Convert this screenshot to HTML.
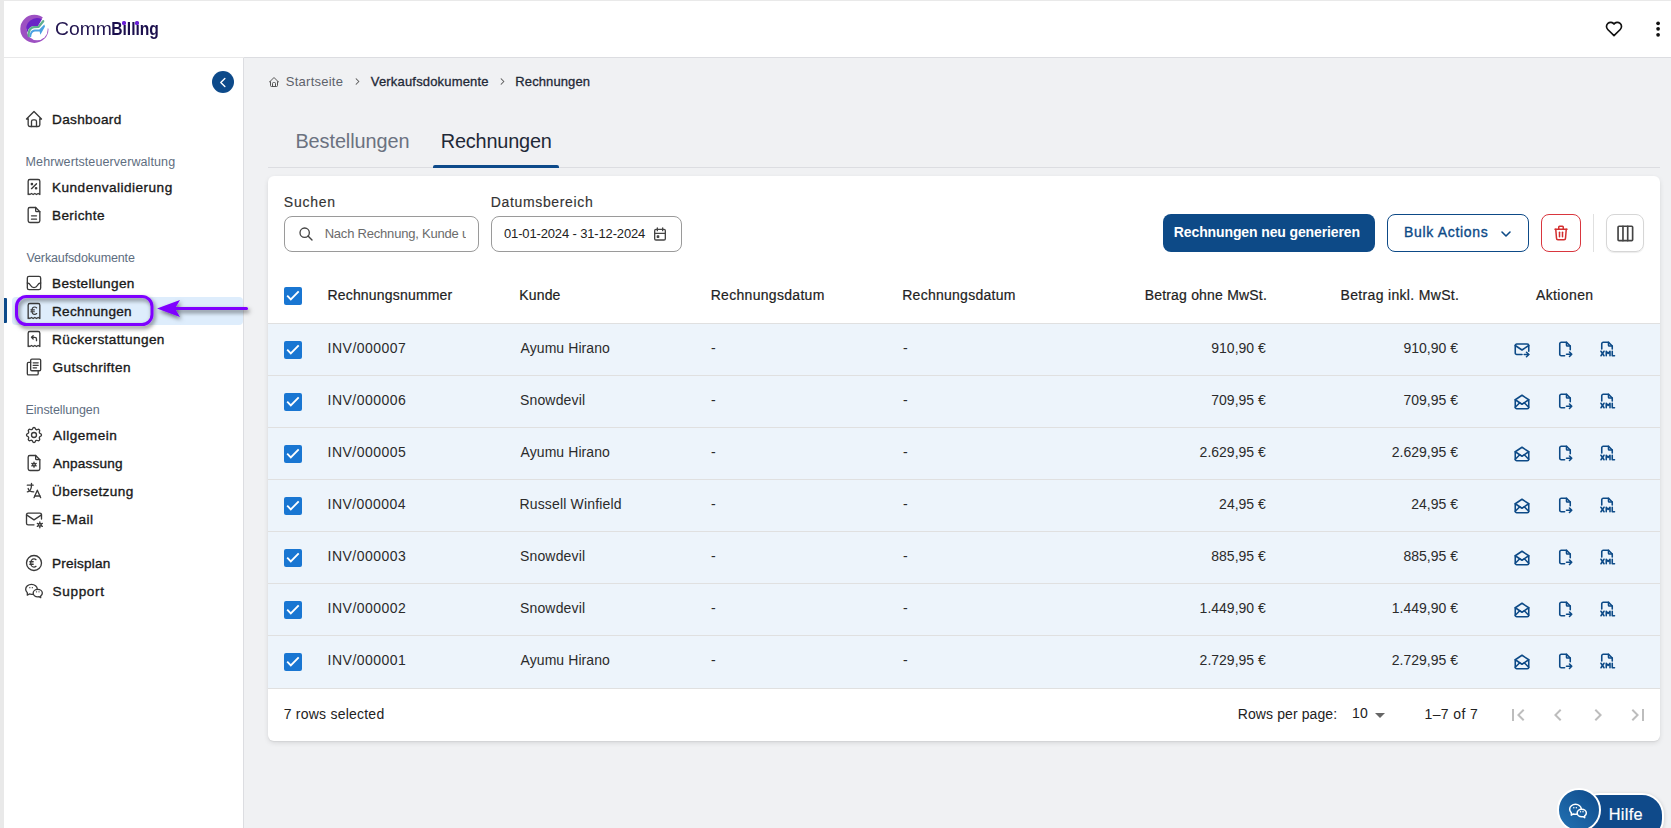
<!DOCTYPE html>
<html><head><meta charset="utf-8">
<style>
html,body{margin:0;padding:0;}
body{width:1671px;height:828px;position:relative;overflow:hidden;background:#f0f1f3;font-family:"Liberation Sans", sans-serif;}
.t{position:absolute;white-space:nowrap;}
</style></head><body>
<div style="position:absolute;left:0px;top:0px;width:4px;height:828px;background:#e9e9e9"></div>
<div style="position:absolute;left:0px;top:0px;width:1671px;height:1px;background:#e9e9e9"></div>
<div style="position:absolute;left:4px;top:1px;width:1667px;height:56px;background:#fff"></div>
<div style="position:absolute;left:4px;top:57px;width:240px;height:1px;background:#e8e8e9"></div>
<div style="position:absolute;left:244px;top:57px;width:1427px;height:1px;background:#dcdde1"></div>
<svg style="position:absolute;left:17px;top:12px;width:36px;height:34px" viewBox="0 0 36 34">
<defs><mask id="lm"><rect x="0" y="0" width="36" height="34" fill="#fff"/><circle cx="20.2" cy="17.8" r="10.5" fill="#000"/><path d="M17.5 16.9 L31.9 -3 L40 -3 L40 16.2 Z" fill="#000"/></mask></defs>
<circle cx="17.4" cy="16.9" r="14.1" fill="#9d50c2" mask="url(#lm)"/>
<path d="M24.9 7.3 A10.5 10.5 0 0 0 9.9 19.6 L10.6 20 C11.2 16.8 13.2 14.6 16.6 14.2 L21 13.9 Z" fill="#6a22c6"/>
<path d="M11.7 24 C11.4 18.6 13.2 15.6 16.8 15.2 L21.7 14.8 L26.2 9.2" fill="none" stroke="#5fae8e" stroke-width="2.3" stroke-linecap="round" stroke-linejoin="round"/>
<path d="M12.9 25.2 C12.5 20.6 14.2 17.7 17.7 17.5 L22.3 17.4 L27.3 12.4 L28 14.4 L23.4 22.8 L22.6 19.5 L17.9 19.6 C15.7 19.8 14.4 21.6 14.1 25.2 Z" fill="#4aa0e2"/>
</svg>
<div class="t" style="left:54.90px;top:15.00px;font-size:18.3px;line-height:28px;color:#22154f;font-weight:400;letter-spacing:0.000px;transform:scaleX(1.0579);transform-origin:0.90px 0;">Comm</div>
<div class="t" style="left:110.80px;top:15.00px;font-size:18.3px;line-height:28px;color:#1b0f4d;font-weight:700;letter-spacing:0.000px;transform:scaleX(0.8542);transform-origin:1.20px 0;">Billing</div>
<div style="position:absolute;left:122.4px;top:21.4px;width:3.2px;height:3.2px;background:#6a1fd8;border-radius:50%"></div>
<div style="position:absolute;left:135.4px;top:21.4px;width:3.2px;height:3.2px;background:#6a1fd8;border-radius:50%"></div>
<svg style="position:absolute;left:1604px;top:19px;width:20px;height:20px;" viewBox="0 0 24 24" fill="none" stroke="#111" stroke-width="2" stroke-linecap="round" stroke-linejoin="round"><path d="M19.5 12.572l-7.5 7.428l-7.5 -7.428a5 5 0 1 1 7.5 -6.566a5 5 0 1 1 7.5 6.572"/></svg>
<svg style="position:absolute;left:1654px;top:18px;width:8px;height:22px" viewBox="0 0 8 22"><circle cx="4.1" cy="5.3" r="1.85" fill="#111"/><circle cx="4.1" cy="10.8" r="1.85" fill="#111"/><circle cx="4.1" cy="16.8" r="1.85" fill="#111"/></svg>
<div style="position:absolute;left:4px;top:58px;width:239px;height:770px;background:#fff"></div>
<div style="position:absolute;left:243px;top:58px;width:1px;height:770px;background:#dcdde1"></div>
<div style="position:absolute;left:212px;top:71px;width:22px;height:22px;border-radius:50%;background:#0d4a8a"></div>
<svg style="position:absolute;left:217px;top:75.5px;width:13px;height:13px;" viewBox="0 0 24 24" fill="none" stroke="#fff" stroke-width="2.6" stroke-linecap="round" stroke-linejoin="round"><path d="M14.5 4.5l-7.5 7.5l7.5 7.5"/></svg>
<div style="position:absolute;left:12px;top:297px;width:231px;height:28px;border-radius:4px;background:#deedfc"></div>
<div style="position:absolute;left:4px;top:298px;width:3px;height:25px;background:#0d4a8a;border-radius:0 1px 1px 0"></div>
<svg style="position:absolute;left:24px;top:109px;width:20px;height:20px;" viewBox="0 0 24 24" fill="none" stroke="#3a3a3a" stroke-width="1.6" stroke-linecap="round" stroke-linejoin="round"><path d="M5 12l-2 0l9 -9l9 9l-2 0"/><path d="M5 12v7a2 2 0 0 0 2 2h10a2 2 0 0 0 2 -2v-7"/><path d="M9 21v-6a2 2 0 0 1 2 -2h2a2 2 0 0 1 2 2v6"/></svg>
<div class="t" style="left:52.00px;top:109.00px;font-size:13.6px;line-height:21px;color:#1a1a1a;font-weight:400;letter-spacing:0.344px;-webkit-text-stroke:0.35px #1a1a1a;">Dashboard</div>
<div class="t" style="left:25.60px;top:153.00px;font-size:12.5px;line-height:19px;color:#5e6d80;font-weight:400;letter-spacing:0.096px;">Mehrwertsteuerverwaltung</div>
<svg style="position:absolute;left:24px;top:177px;width:20px;height:20px;" viewBox="0 0 24 24" fill="none" stroke="#3a3a3a" stroke-width="1.6" stroke-linecap="round" stroke-linejoin="round"><path d="M9 14l6 -6"/><circle cx="9.5" cy="8.5" r="0.8"/><circle cx="14.5" cy="13.5" r="0.8"/><path d="M5 21v-16a2 2 0 0 1 2 -2h10a2 2 0 0 1 2 2v16l-2 -1.2l-2 1.2l-2 -1.2l-2 1.2l-2 -1.2l-2 1.2l-2 -1.2z"/></svg>
<div class="t" style="left:52.00px;top:177.00px;font-size:13.6px;line-height:21px;color:#1a1a1a;font-weight:400;letter-spacing:0.475px;-webkit-text-stroke:0.35px #1a1a1a;">Kundenvalidierung</div>
<svg style="position:absolute;left:24px;top:205px;width:20px;height:20px;" viewBox="0 0 24 24" fill="none" stroke="#3a3a3a" stroke-width="1.6" stroke-linecap="round" stroke-linejoin="round"><path d="M14 3v4a1 1 0 0 0 1 1h4"/><path d="M17 21h-10a2 2 0 0 1 -2 -2v-14a2 2 0 0 1 2 -2h7l5 5v11a2 2 0 0 1 -2 2z"/><path d="M9 13l6 0"/><path d="M9 17l6 0"/></svg>
<div class="t" style="left:52.00px;top:205.00px;font-size:13.6px;line-height:21px;color:#1a1a1a;font-weight:400;letter-spacing:0.371px;-webkit-text-stroke:0.35px #1a1a1a;">Berichte</div>
<div class="t" style="left:26.55px;top:249.00px;font-size:12.5px;line-height:19px;color:#5e6d80;font-weight:400;letter-spacing:-0.137px;">Verkaufsdokumente</div>
<svg style="position:absolute;left:24px;top:273px;width:20px;height:20px;" viewBox="0 0 24 24" fill="none" stroke="#3a3a3a" stroke-width="1.6" stroke-linecap="round" stroke-linejoin="round"><path d="M4 6a2 2 0 0 1 2 -2h12a2 2 0 0 1 2 2v12a2 2 0 0 1 -2 2h-12a2 2 0 0 1 -2 -2z"/><path d="M4 12c2 0 3 1 4 3c1 2 2.5 2.5 4 2.5s3 -0.5 4 -2.5c1 -2 2 -3 4 -3"/></svg>
<div class="t" style="left:52.00px;top:273.00px;font-size:13.6px;line-height:21px;color:#1a1a1a;font-weight:400;letter-spacing:0.345px;-webkit-text-stroke:0.35px #1a1a1a;">Bestellungen</div>
<svg style="position:absolute;left:24px;top:301px;width:20px;height:20px;" viewBox="0 0 24 24" fill="none" stroke="#3a3a3a" stroke-width="1.6" stroke-linecap="round" stroke-linejoin="round"><path d="M5 21v-16a2 2 0 0 1 2 -2h10a2 2 0 0 1 2 2v16l-2 -1.2l-2 1.2l-2 -1.2l-2 1.2l-2 -1.2l-2 1.2l-2 -1.2z"/><path d="M15.2 8.2c-.6 -.6 -1.4 -1 -2.3 -1c-1.9 0 -3.4 2 -3.4 4.4s1.5 4.4 3.4 4.4c.9 0 1.7 -.4 2.3 -1" stroke-width="1.4"/><path d="M8.2 10.6h4.3" stroke-width="1.3"/><path d="M8.2 12.8h4.3" stroke-width="1.3"/></svg>
<div class="t" style="left:52.00px;top:301.00px;font-size:13.6px;line-height:21px;color:#1a1a1a;font-weight:400;letter-spacing:0.283px;-webkit-text-stroke:0.35px #1a1a1a;">Rechnungen</div>
<svg style="position:absolute;left:24px;top:329px;width:20px;height:20px;" viewBox="0 0 24 24" fill="none" stroke="#3a3a3a" stroke-width="1.6" stroke-linecap="round" stroke-linejoin="round"><path d="M5 21v-16a2 2 0 0 1 2 -2h10a2 2 0 0 1 2 2v16l-2 -1.2l-2 1.2l-2 -1.2l-2 1.2l-2 -1.2l-2 1.2l-2 -1.2z"/><path d="M15 14v-2a2 2 0 0 0 -2 -2h-4l2 -2m-2 2l2 2"/></svg>
<div class="t" style="left:52.00px;top:329.00px;font-size:13.6px;line-height:21px;color:#1a1a1a;font-weight:400;letter-spacing:0.390px;-webkit-text-stroke:0.35px #1a1a1a;">Rückerstattungen</div>
<svg style="position:absolute;left:24px;top:357px;width:20px;height:20px;" viewBox="0 0 24 24" fill="none" stroke="#3a3a3a" stroke-width="1.6" stroke-linecap="round" stroke-linejoin="round"><path d="M8 4a1.5 1.5 0 0 1 1.5 -1.5h9a1.5 1.5 0 0 1 1.5 1.5v11a1.5 1.5 0 0 1 -1.5 1.5h-9a1.5 1.5 0 0 1 -1.5 -1.5z"/><path d="M8 6.5h-2.5a1.5 1.5 0 0 0 -1.5 1.5v12a1.5 1.5 0 0 0 1.5 1.5h10a1.5 1.5 0 0 0 1.5 -1.5v-3"/><path d="M11 7h6"/><path d="M11 10h6"/><path d="M11 13h4"/></svg>
<div class="t" style="left:52.40px;top:357.00px;font-size:13.6px;line-height:21px;color:#1a1a1a;font-weight:400;letter-spacing:0.450px;-webkit-text-stroke:0.35px #1a1a1a;">Gutschriften</div>
<div class="t" style="left:25.60px;top:401.00px;font-size:12.5px;line-height:19px;color:#5e6d80;font-weight:400;letter-spacing:-0.088px;">Einstellungen</div>
<svg style="position:absolute;left:24px;top:425px;width:20px;height:20px;" viewBox="0 0 24 24" fill="none" stroke="#3a3a3a" stroke-width="1.6" stroke-linecap="round" stroke-linejoin="round"><path d="M10.325 4.317c.426 -1.756 2.924 -1.756 3.35 0a1.724 1.724 0 0 0 2.573 1.066c1.543 -.94 3.31 .826 2.37 2.37a1.724 1.724 0 0 0 1.065 2.572c1.756 .426 1.756 2.924 0 3.35a1.724 1.724 0 0 0 -1.066 2.573c.94 1.543 -.826 3.31 -2.37 2.37a1.724 1.724 0 0 0 -2.572 1.065c-.426 1.756 -2.924 1.756 -3.35 0a1.724 1.724 0 0 0 -2.573 -1.066c-1.543 .94 -3.31 -.826 -2.37 -2.37a1.724 1.724 0 0 0 -1.065 -2.572c-1.756 -.426 -1.756 -2.924 0 -3.35a1.724 1.724 0 0 0 1.066 -2.573c-.94 -1.543 .826 -3.31 2.37 -2.37c1 .608 2.296 .07 2.572 -1.065z"/><path d="M9 12a3 3 0 1 0 6 0a3 3 0 0 0 -6 0"/></svg>
<div class="t" style="left:53.05px;top:425.00px;font-size:13.6px;line-height:21px;color:#1a1a1a;font-weight:400;letter-spacing:0.513px;-webkit-text-stroke:0.35px #1a1a1a;">Allgemein</div>
<svg style="position:absolute;left:24px;top:453px;width:20px;height:20px;" viewBox="0 0 24 24" fill="none" stroke="#3a3a3a" stroke-width="1.6" stroke-linecap="round" stroke-linejoin="round"><path d="M14 3v4a1 1 0 0 0 1 1h4"/><path d="M17 21h-10a2 2 0 0 1 -2 -2v-14a2 2 0 0 1 2 -2h7l5 5v11a2 2 0 0 1 -2 2z"/><circle cx="12" cy="14" r="1.5"/><path d="M12 11v1"/><path d="M12 16v1"/><path d="M9.4 12.5l.9 .5"/><path d="M13.7 15l.9 .5"/><path d="M14.6 12.5l-.9 .5"/><path d="M10.3 15l-.9 .5"/></svg>
<div class="t" style="left:53.05px;top:453.00px;font-size:13.6px;line-height:21px;color:#1a1a1a;font-weight:400;letter-spacing:0.194px;-webkit-text-stroke:0.35px #1a1a1a;">Anpassung</div>
<svg style="position:absolute;left:24px;top:481px;width:20px;height:20px;" viewBox="0 0 24 24" fill="none" stroke="#3a3a3a" stroke-width="1.6" stroke-linecap="round" stroke-linejoin="round"><path d="M4 5h7"/><path d="M9 3v2c0 4.418 -2.239 8 -5 8"/><path d="M5 9c0 2.144 2.952 3.908 6.7 4"/><path d="M12 20l4 -9l4 9"/><path d="M19.1 18h-6.2"/></svg>
<div class="t" style="left:52.05px;top:481.00px;font-size:13.6px;line-height:21px;color:#1a1a1a;font-weight:400;letter-spacing:0.420px;-webkit-text-stroke:0.35px #1a1a1a;">Übersetzung</div>
<svg style="position:absolute;left:24px;top:509px;width:20px;height:20px;" viewBox="0 0 24 24" fill="none" stroke="#3a3a3a" stroke-width="1.6" stroke-linecap="round" stroke-linejoin="round"><path d="M12 19h-7a2 2 0 0 1 -2 -2v-10a2 2 0 0 1 2 -2h14a2 2 0 0 1 2 2v5"/><path d="M3 7l9 6l9 -6"/><circle cx="19" cy="19" r="1.6"/><path d="M19 15.5v1.5"/><path d="M19 21v1.5"/><path d="M22 17.2l-1.3 .8"/><path d="M17.3 20l-1.3 .8"/><path d="M16 17.2l1.3 .8"/><path d="M20.7 20l1.3 .8"/></svg>
<div class="t" style="left:52.00px;top:509.00px;font-size:13.6px;line-height:21px;color:#1a1a1a;font-weight:400;letter-spacing:0.500px;-webkit-text-stroke:0.35px #1a1a1a;">E-Mail</div>
<svg style="position:absolute;left:24px;top:553px;width:20px;height:20px;" viewBox="0 0 24 24" fill="none" stroke="#3a3a3a" stroke-width="1.6" stroke-linecap="round" stroke-linejoin="round"><path d="M12 12m-9 0a9 9 0 1 0 18 0a9 9 0 1 0 -18 0"/><path d="M14.401 8c-.669 -.628 -1.5 -1 -2.401 -1c-2.21 0 -4 2.239 -4 5s1.79 5 4 5c.9 0 1.731 -.372 2.4 -1"/><path d="M7 10.5h4"/><path d="M7 13.5h4"/></svg>
<div class="t" style="left:52.00px;top:553.00px;font-size:13.6px;line-height:21px;color:#1a1a1a;font-weight:400;letter-spacing:0.219px;-webkit-text-stroke:0.35px #1a1a1a;">Preisplan</div>
<svg style="position:absolute;left:24px;top:581px;width:20px;height:20px;" viewBox="0 0 24 24" fill="none" stroke="#3a3a3a" stroke-width="1.6" stroke-linecap="round" stroke-linejoin="round"><path d="M16.5 10c3.038 0 5.5 2.015 5.5 4.5c0 1.397 -.778 2.645 -2 3.47l0 2.03l-1.964 -1.178a6.649 6.649 0 0 1 -1.536 .178c-3.038 0 -5.5 -2.015 -5.5 -4.5s2.462 -4.5 5.5 -4.5z"/><path d="M11.197 15.698c-.69 .196 -1.43 .302 -2.197 .302a8.008 8.008 0 0 1 -2.612 -.432l-2.388 1.432v-2.801c-1.237 -1.082 -2 -2.564 -2 -4.199c0 -3.314 3.134 -6 7 -6c3.782 0 6.863 2.57 7 5.785l0 .233"/><path d="M10 8h.01"/><path d="M7 8h.01"/><path d="M15 13h.01"/><path d="M18 13h.01"/></svg>
<div class="t" style="left:52.45px;top:581.00px;font-size:13.6px;line-height:21px;color:#1a1a1a;font-weight:400;letter-spacing:0.667px;-webkit-text-stroke:0.35px #1a1a1a;">Support</div>
<svg style="position:absolute;left:268px;top:76px;width:12px;height:12px;" viewBox="0 0 24 24" fill="none" stroke="#555" stroke-width="2" stroke-linecap="round" stroke-linejoin="round"><path d="M5 12l-2 0l9 -9l9 9l-2 0"/><path d="M5 12v7a2 2 0 0 0 2 2h10a2 2 0 0 0 2 -2v-7"/><path d="M9 21v-6a2 2 0 0 1 2 -2h2a2 2 0 0 1 2 2v6"/></svg>
<div class="t" style="left:285.80px;top:72.00px;font-size:13px;line-height:20px;color:#5d626b;font-weight:400;letter-spacing:0.250px;">Startseite</div>
<svg style="position:absolute;left:352px;top:76px;width:11px;height:11px;" viewBox="0 0 24 24" fill="none" stroke="#555" stroke-width="2.3" stroke-linecap="round" stroke-linejoin="round"><path d="M9 6l6 6l-6 6"/></svg>
<div class="t" style="left:370.85px;top:72.00px;font-size:13px;line-height:20px;color:#1f2937;font-weight:400;letter-spacing:0.172px;-webkit-text-stroke:0.3px #1f2937;">Verkaufsdokumente</div>
<svg style="position:absolute;left:497px;top:76px;width:11px;height:11px;" viewBox="0 0 24 24" fill="none" stroke="#555" stroke-width="2.3" stroke-linecap="round" stroke-linejoin="round"><path d="M9 6l6 6l-6 6"/></svg>
<div class="t" style="left:515.35px;top:72.00px;font-size:13px;line-height:20px;color:#1f2937;font-weight:400;letter-spacing:0.106px;-webkit-text-stroke:0.3px #1f2937;">Rechnungen</div>
<div class="t" style="left:295.45px;top:126.00px;font-size:19.9px;line-height:30px;color:#6b7280;font-weight:400;letter-spacing:-0.086px;">Bestellungen</div>
<div class="t" style="left:440.75px;top:126.00px;font-size:19.9px;line-height:30px;color:#1f2937;font-weight:400;letter-spacing:-0.183px;">Rechnungen</div>
<div style="position:absolute;left:268px;top:167px;width:1392px;height:1px;background:#dcdde1"></div>
<div style="position:absolute;left:433px;top:165px;width:126px;height:3px;background:#0d4a8a;border-radius:2px 2px 0 0"></div>
<div style="position:absolute;left:268px;top:176px;width:1392px;height:565px;background:#fff;border-radius:6px;box-shadow:0 2px 5px rgba(0,0,0,0.10),0 1px 1px rgba(0,0,0,0.05)"></div>
<div class="t" style="left:283.85px;top:192.00px;font-size:14px;line-height:21px;color:#333;font-weight:400;letter-spacing:0.750px;-webkit-text-stroke:0.15px #333;">Suchen</div>
<div style="position:absolute;left:284px;top:216px;width:193px;height:34px;border:1px solid #9a9a9a;border-radius:8px"></div>
<svg style="position:absolute;left:298px;top:226px;width:16px;height:16px;" viewBox="0 0 24 24" fill="none" stroke="#444" stroke-width="2" stroke-linecap="round" stroke-linejoin="round"><path d="M10 10m-7 0a7 7 0 1 0 14 0a7 7 0 1 0 -14 0"/><path d="M21 21l-6 -6"/></svg>
<div style="position:absolute;left:320px;top:216px;width:146px;height:36px;overflow:hidden"><div class="t" style="left:4.65px;top:8.00px;font-size:13px;line-height:20px;color:#6b6b6b;font-weight:400;letter-spacing:-0.205px;">Nach Rechnung, Kunde und Status</div></div>
<div class="t" style="left:490.75px;top:192.00px;font-size:14px;line-height:21px;color:#333;font-weight:400;letter-spacing:0.650px;-webkit-text-stroke:0.15px #333;">Datumsbereich</div>
<div style="position:absolute;left:491px;top:216px;width:189px;height:34px;border:1px solid #9a9a9a;border-radius:8px"></div>
<div class="t" style="left:504.00px;top:224.00px;font-size:13px;line-height:20px;color:#222;font-weight:400;letter-spacing:-0.148px;">01-01-2024 - 31-12-2024</div>
<svg style="position:absolute;left:652px;top:226px;width:16px;height:16px;" viewBox="0 0 24 24" fill="none" stroke="#444" stroke-width="2" stroke-linecap="round" stroke-linejoin="round"><path d="M4 7a2 2 0 0 1 2 -2h12a2 2 0 0 1 2 2v12a2 2 0 0 1 -2 2h-12a2 2 0 0 1 -2 -2z"/><path d="M16 3l0 4"/><path d="M8 3l0 4"/><path d="M4 11l16 0"/><path d="M8 15h2v2h-2z"/></svg>
<div style="position:absolute;left:1163px;top:214px;width:212px;height:38px;background:#0d4a87;border-radius:8px"></div>
<div class="t" style="left:1173.85px;top:222.00px;font-size:14px;line-height:21px;color:#fff;font-weight:700;letter-spacing:-0.119px;">Rechnungen neu generieren</div>
<div style="position:absolute;left:1387px;top:214px;width:140px;height:36px;border:1px solid #0d4a87;border-radius:8px"></div>
<div class="t" style="left:1403.95px;top:222.00px;font-size:14px;line-height:21px;color:#0d4a87;font-weight:400;letter-spacing:0.682px;-webkit-text-stroke:0.35px #0d4a87;">Bulk Actions</div>
<svg style="position:absolute;left:1498px;top:226px;width:16px;height:16px;" viewBox="0 0 24 24" fill="none" stroke="#0d4a87" stroke-width="2.4" stroke-linecap="round" stroke-linejoin="round"><path d="M6 9l6 6l6 -6"/></svg>
<div style="position:absolute;left:1541px;top:214px;width:38px;height:36px;border:1px solid #d9363e;border-radius:8px"></div>
<svg style="position:absolute;left:1552px;top:224px;width:18px;height:18px;" viewBox="0 0 24 24" fill="none" stroke="#d32f2f" stroke-width="2" stroke-linecap="round" stroke-linejoin="round"><path d="M4 7l16 0"/><path d="M10 11l0 6"/><path d="M14 11l0 6"/><path d="M5 7l1 12a2 2 0 0 0 2 2h8a2 2 0 0 0 2 -2l1 -12"/><path d="M9 7v-3a1 1 0 0 1 1 -1h4a1 1 0 0 1 1 1v3"/></svg>
<div style="position:absolute;left:1593px;top:214px;width:1px;height:38px;background:#e0e0e0"></div>
<div style="position:absolute;left:1606px;top:214px;width:36px;height:36px;border:1px solid #d6d6d6;border-radius:8px;box-shadow:0 1px 1px rgba(0,0,0,0.08)"></div>
<svg style="position:absolute;left:1615.5px;top:223.5px;width:19px;height:19px;" viewBox="0 0 24 24" fill="none" stroke="#444" stroke-width="2.1" stroke-linecap="round" stroke-linejoin="round"><rect x="2.6" y="2.8" width="18.4" height="18.2" rx="1.2"/><path d="M8.8 2.8v18.2"/><path d="M14.8 2.8v18.2"/></svg>
<div style="position:absolute;left:284px;top:287px;width:18px;height:18px;background:#1976d2;border-radius:2px"></div><svg style="position:absolute;left:284px;top:287px;width:18px;height:18px;" viewBox="0 0 18 18" fill="none" stroke="#fff" stroke-width="1.9" stroke-linecap="round" stroke-linejoin="round"><path d="M3.2 8.7 L6.8 12.3 L14.7 4.4" stroke-linecap="butt" stroke-linejoin="miter"/></svg>
<div class="t" style="left:327.45px;top:285.00px;font-size:14px;line-height:21px;color:#222;font-weight:400;letter-spacing:0.186px;-webkit-text-stroke:0.2px #222;">Rechnungsnummer</div>
<div class="t" style="left:519.35px;top:285.00px;font-size:14px;line-height:21px;color:#222;font-weight:400;letter-spacing:0.125px;-webkit-text-stroke:0.2px #222;">Kunde</div>
<div class="t" style="left:710.65px;top:285.00px;font-size:14px;line-height:21px;color:#222;font-weight:400;letter-spacing:0.304px;-webkit-text-stroke:0.2px #222;">Rechnungsdatum</div>
<div class="t" style="left:902.25px;top:285.00px;font-size:14px;line-height:21px;color:#222;font-weight:400;letter-spacing:0.258px;-webkit-text-stroke:0.2px #222;">Rechnungsdatum</div>
<div class="t" style="left:1144.65px;top:285.00px;font-size:14px;line-height:21px;color:#222;font-weight:400;letter-spacing:0.194px;-webkit-text-stroke:0.2px #222;">Betrag ohne MwSt.</div>
<div class="t" style="left:1340.55px;top:285.00px;font-size:14px;line-height:21px;color:#222;font-weight:400;letter-spacing:0.329px;-webkit-text-stroke:0.2px #222;">Betrag inkl. MwSt.</div>
<div class="t" style="left:1536.05px;top:285.00px;font-size:14px;line-height:21px;color:#222;font-weight:400;letter-spacing:0.364px;-webkit-text-stroke:0.2px #222;">Aktionen</div>
<div style="position:absolute;left:268px;top:323px;width:1392px;height:1px;background:#e0e0e0"></div>
<div style="position:absolute;left:268px;top:324px;width:1392px;height:51px;background:#edf4fb"></div>
<div style="position:absolute;left:268px;top:375px;width:1392px;height:1px;background:#e0e0e0"></div>
<div style="position:absolute;left:284px;top:341px;width:18px;height:18px;background:#1976d2;border-radius:2px"></div><svg style="position:absolute;left:284px;top:341px;width:18px;height:18px;" viewBox="0 0 18 18" fill="none" stroke="#fff" stroke-width="1.9" stroke-linecap="round" stroke-linejoin="round"><path d="M3.2 8.7 L6.8 12.3 L14.7 4.4" stroke-linecap="butt" stroke-linejoin="miter"/></svg>
<div class="t" style="left:327.60px;top:338.00px;font-size:14px;line-height:21px;color:#2b2b2b;font-weight:400;letter-spacing:0.483px;">INV/000007</div>
<div class="t" style="left:520.55px;top:338.00px;font-size:14px;line-height:21px;color:#2b2b2b;font-weight:400;letter-spacing:0.073px;">Ayumu Hirano</div>
<div class="t" style="left:710.90px;top:338.00px;font-size:14px;line-height:21px;color:#2b2b2b;font-weight:400;letter-spacing:0.000px;">-</div>
<div class="t" style="left:902.90px;top:338.00px;font-size:14px;line-height:21px;color:#2b2b2b;font-weight:400;letter-spacing:0.000px;">-</div>
<div class="t" style="left:1211.30px;top:338.00px;font-size:14px;line-height:21px;color:#2b2b2b;font-weight:400;letter-spacing:0.000px;">910,90 €</div>
<div class="t" style="left:1403.50px;top:338.00px;font-size:14px;line-height:21px;color:#2b2b2b;font-weight:400;letter-spacing:0.000px;">910,90 €</div>
<svg style="position:absolute;left:1513px;top:341px;width:18px;height:18px;" viewBox="0 0 24 24" fill="none" stroke="#0d4a87" stroke-width="2.1" stroke-linecap="round" stroke-linejoin="round"><path d="M12 18h-7a2 2 0 0 1 -2 -2v-10a2 2 0 0 1 2 -2h14a2 2 0 0 1 2 2v7.5"/><path d="M3 6l9 6l9 -6"/><path d="M15 18h6"/><path d="M18 15l3 3l-3 3"/></svg>
<svg style="position:absolute;left:1556px;top:340px;width:18px;height:18px;" viewBox="0 0 24 24" fill="none" stroke="#0d4a87" stroke-width="2.1" stroke-linecap="round" stroke-linejoin="round"><path d="M14 3v4a1 1 0 0 0 1 1h4"/><path d="M11.5 21h-4.5a2 2 0 0 1 -2 -2v-14a2 2 0 0 1 2 -2h7l5 5v5m-5 6h7m-3 -3l3 3l-3 3"/></svg>
<svg style="position:absolute;left:1597.5px;top:340px;width:18px;height:18px;" viewBox="0 0 24 24" fill="none" stroke="#0d4a87" stroke-width="2.1" stroke-linecap="round" stroke-linejoin="round"><path d="M14 3v4a1 1 0 0 0 1 1h4"/><path d="M5 12v-7a2 2 0 0 1 2 -2h7l5 5v4"/><path d="M4 15l4 6"/><path d="M4 21l4 -6"/><path d="M19 15v6h3"/><path d="M11 21v-6l2.5 3l2.5 -3v6"/></svg>
<div style="position:absolute;left:268px;top:376px;width:1392px;height:51px;background:#edf4fb"></div>
<div style="position:absolute;left:268px;top:427px;width:1392px;height:1px;background:#e0e0e0"></div>
<div style="position:absolute;left:284px;top:393px;width:18px;height:18px;background:#1976d2;border-radius:2px"></div><svg style="position:absolute;left:284px;top:393px;width:18px;height:18px;" viewBox="0 0 18 18" fill="none" stroke="#fff" stroke-width="1.9" stroke-linecap="round" stroke-linejoin="round"><path d="M3.2 8.7 L6.8 12.3 L14.7 4.4" stroke-linecap="butt" stroke-linejoin="miter"/></svg>
<div class="t" style="left:327.60px;top:390.00px;font-size:14px;line-height:21px;color:#2b2b2b;font-weight:400;letter-spacing:0.472px;">INV/000006</div>
<div class="t" style="left:519.95px;top:390.00px;font-size:14px;line-height:21px;color:#2b2b2b;font-weight:400;letter-spacing:0.169px;">Snowdevil</div>
<div class="t" style="left:710.90px;top:390.00px;font-size:14px;line-height:21px;color:#2b2b2b;font-weight:400;letter-spacing:0.000px;">-</div>
<div class="t" style="left:902.90px;top:390.00px;font-size:14px;line-height:21px;color:#2b2b2b;font-weight:400;letter-spacing:0.000px;">-</div>
<div class="t" style="left:1211.30px;top:390.00px;font-size:14px;line-height:21px;color:#2b2b2b;font-weight:400;letter-spacing:0.000px;">709,95 €</div>
<div class="t" style="left:1403.50px;top:390.00px;font-size:14px;line-height:21px;color:#2b2b2b;font-weight:400;letter-spacing:0.000px;">709,95 €</div>
<svg style="position:absolute;left:1513px;top:393px;width:18px;height:18px;" viewBox="0 0 24 24" fill="none" stroke="#0d4a87" stroke-width="2.1" stroke-linecap="round" stroke-linejoin="round"><path d="M3 9l9 6l9 -6l-9 -6l-9 6"/><path d="M21 9v10a2 2 0 0 1 -2 2h-14a2 2 0 0 1 -2 -2v-10"/><path d="M3 19l6 -6"/><path d="M15 13l6 6"/></svg>
<svg style="position:absolute;left:1556px;top:392px;width:18px;height:18px;" viewBox="0 0 24 24" fill="none" stroke="#0d4a87" stroke-width="2.1" stroke-linecap="round" stroke-linejoin="round"><path d="M14 3v4a1 1 0 0 0 1 1h4"/><path d="M11.5 21h-4.5a2 2 0 0 1 -2 -2v-14a2 2 0 0 1 2 -2h7l5 5v5m-5 6h7m-3 -3l3 3l-3 3"/></svg>
<svg style="position:absolute;left:1597.5px;top:392px;width:18px;height:18px;" viewBox="0 0 24 24" fill="none" stroke="#0d4a87" stroke-width="2.1" stroke-linecap="round" stroke-linejoin="round"><path d="M14 3v4a1 1 0 0 0 1 1h4"/><path d="M5 12v-7a2 2 0 0 1 2 -2h7l5 5v4"/><path d="M4 15l4 6"/><path d="M4 21l4 -6"/><path d="M19 15v6h3"/><path d="M11 21v-6l2.5 3l2.5 -3v6"/></svg>
<div style="position:absolute;left:268px;top:428px;width:1392px;height:51px;background:#edf4fb"></div>
<div style="position:absolute;left:268px;top:479px;width:1392px;height:1px;background:#e0e0e0"></div>
<div style="position:absolute;left:284px;top:445px;width:18px;height:18px;background:#1976d2;border-radius:2px"></div><svg style="position:absolute;left:284px;top:445px;width:18px;height:18px;" viewBox="0 0 18 18" fill="none" stroke="#fff" stroke-width="1.9" stroke-linecap="round" stroke-linejoin="round"><path d="M3.2 8.7 L6.8 12.3 L14.7 4.4" stroke-linecap="butt" stroke-linejoin="miter"/></svg>
<div class="t" style="left:327.60px;top:442.00px;font-size:14px;line-height:21px;color:#2b2b2b;font-weight:400;letter-spacing:0.472px;">INV/000005</div>
<div class="t" style="left:520.55px;top:442.00px;font-size:14px;line-height:21px;color:#2b2b2b;font-weight:400;letter-spacing:0.073px;">Ayumu Hirano</div>
<div class="t" style="left:710.90px;top:442.00px;font-size:14px;line-height:21px;color:#2b2b2b;font-weight:400;letter-spacing:0.000px;">-</div>
<div class="t" style="left:902.90px;top:442.00px;font-size:14px;line-height:21px;color:#2b2b2b;font-weight:400;letter-spacing:0.000px;">-</div>
<div class="t" style="left:1199.60px;top:442.00px;font-size:14px;line-height:21px;color:#2b2b2b;font-weight:400;letter-spacing:0.000px;">2.629,95 €</div>
<div class="t" style="left:1391.80px;top:442.00px;font-size:14px;line-height:21px;color:#2b2b2b;font-weight:400;letter-spacing:0.000px;">2.629,95 €</div>
<svg style="position:absolute;left:1513px;top:445px;width:18px;height:18px;" viewBox="0 0 24 24" fill="none" stroke="#0d4a87" stroke-width="2.1" stroke-linecap="round" stroke-linejoin="round"><path d="M3 9l9 6l9 -6l-9 -6l-9 6"/><path d="M21 9v10a2 2 0 0 1 -2 2h-14a2 2 0 0 1 -2 -2v-10"/><path d="M3 19l6 -6"/><path d="M15 13l6 6"/></svg>
<svg style="position:absolute;left:1556px;top:444px;width:18px;height:18px;" viewBox="0 0 24 24" fill="none" stroke="#0d4a87" stroke-width="2.1" stroke-linecap="round" stroke-linejoin="round"><path d="M14 3v4a1 1 0 0 0 1 1h4"/><path d="M11.5 21h-4.5a2 2 0 0 1 -2 -2v-14a2 2 0 0 1 2 -2h7l5 5v5m-5 6h7m-3 -3l3 3l-3 3"/></svg>
<svg style="position:absolute;left:1597.5px;top:444px;width:18px;height:18px;" viewBox="0 0 24 24" fill="none" stroke="#0d4a87" stroke-width="2.1" stroke-linecap="round" stroke-linejoin="round"><path d="M14 3v4a1 1 0 0 0 1 1h4"/><path d="M5 12v-7a2 2 0 0 1 2 -2h7l5 5v4"/><path d="M4 15l4 6"/><path d="M4 21l4 -6"/><path d="M19 15v6h3"/><path d="M11 21v-6l2.5 3l2.5 -3v6"/></svg>
<div style="position:absolute;left:268px;top:480px;width:1392px;height:51px;background:#edf4fb"></div>
<div style="position:absolute;left:268px;top:531px;width:1392px;height:1px;background:#e0e0e0"></div>
<div style="position:absolute;left:284px;top:497px;width:18px;height:18px;background:#1976d2;border-radius:2px"></div><svg style="position:absolute;left:284px;top:497px;width:18px;height:18px;" viewBox="0 0 18 18" fill="none" stroke="#fff" stroke-width="1.9" stroke-linecap="round" stroke-linejoin="round"><path d="M3.2 8.7 L6.8 12.3 L14.7 4.4" stroke-linecap="butt" stroke-linejoin="miter"/></svg>
<div class="t" style="left:327.60px;top:494.00px;font-size:14px;line-height:21px;color:#2b2b2b;font-weight:400;letter-spacing:0.450px;">INV/000004</div>
<div class="t" style="left:519.45px;top:494.00px;font-size:14px;line-height:21px;color:#2b2b2b;font-weight:400;letter-spacing:0.163px;">Russell Winfield</div>
<div class="t" style="left:710.90px;top:494.00px;font-size:14px;line-height:21px;color:#2b2b2b;font-weight:400;letter-spacing:0.000px;">-</div>
<div class="t" style="left:902.90px;top:494.00px;font-size:14px;line-height:21px;color:#2b2b2b;font-weight:400;letter-spacing:0.000px;">-</div>
<div class="t" style="left:1219.10px;top:494.00px;font-size:14px;line-height:21px;color:#2b2b2b;font-weight:400;letter-spacing:0.000px;">24,95 €</div>
<div class="t" style="left:1411.30px;top:494.00px;font-size:14px;line-height:21px;color:#2b2b2b;font-weight:400;letter-spacing:0.000px;">24,95 €</div>
<svg style="position:absolute;left:1513px;top:497px;width:18px;height:18px;" viewBox="0 0 24 24" fill="none" stroke="#0d4a87" stroke-width="2.1" stroke-linecap="round" stroke-linejoin="round"><path d="M3 9l9 6l9 -6l-9 -6l-9 6"/><path d="M21 9v10a2 2 0 0 1 -2 2h-14a2 2 0 0 1 -2 -2v-10"/><path d="M3 19l6 -6"/><path d="M15 13l6 6"/></svg>
<svg style="position:absolute;left:1556px;top:496px;width:18px;height:18px;" viewBox="0 0 24 24" fill="none" stroke="#0d4a87" stroke-width="2.1" stroke-linecap="round" stroke-linejoin="round"><path d="M14 3v4a1 1 0 0 0 1 1h4"/><path d="M11.5 21h-4.5a2 2 0 0 1 -2 -2v-14a2 2 0 0 1 2 -2h7l5 5v5m-5 6h7m-3 -3l3 3l-3 3"/></svg>
<svg style="position:absolute;left:1597.5px;top:496px;width:18px;height:18px;" viewBox="0 0 24 24" fill="none" stroke="#0d4a87" stroke-width="2.1" stroke-linecap="round" stroke-linejoin="round"><path d="M14 3v4a1 1 0 0 0 1 1h4"/><path d="M5 12v-7a2 2 0 0 1 2 -2h7l5 5v4"/><path d="M4 15l4 6"/><path d="M4 21l4 -6"/><path d="M19 15v6h3"/><path d="M11 21v-6l2.5 3l2.5 -3v6"/></svg>
<div style="position:absolute;left:268px;top:532px;width:1392px;height:51px;background:#edf4fb"></div>
<div style="position:absolute;left:268px;top:583px;width:1392px;height:1px;background:#e0e0e0"></div>
<div style="position:absolute;left:284px;top:549px;width:18px;height:18px;background:#1976d2;border-radius:2px"></div><svg style="position:absolute;left:284px;top:549px;width:18px;height:18px;" viewBox="0 0 18 18" fill="none" stroke="#fff" stroke-width="1.9" stroke-linecap="round" stroke-linejoin="round"><path d="M3.2 8.7 L6.8 12.3 L14.7 4.4" stroke-linecap="butt" stroke-linejoin="miter"/></svg>
<div class="t" style="left:327.60px;top:546.00px;font-size:14px;line-height:21px;color:#2b2b2b;font-weight:400;letter-spacing:0.472px;">INV/000003</div>
<div class="t" style="left:519.95px;top:546.00px;font-size:14px;line-height:21px;color:#2b2b2b;font-weight:400;letter-spacing:0.169px;">Snowdevil</div>
<div class="t" style="left:710.90px;top:546.00px;font-size:14px;line-height:21px;color:#2b2b2b;font-weight:400;letter-spacing:0.000px;">-</div>
<div class="t" style="left:902.90px;top:546.00px;font-size:14px;line-height:21px;color:#2b2b2b;font-weight:400;letter-spacing:0.000px;">-</div>
<div class="t" style="left:1211.30px;top:546.00px;font-size:14px;line-height:21px;color:#2b2b2b;font-weight:400;letter-spacing:0.000px;">885,95 €</div>
<div class="t" style="left:1403.50px;top:546.00px;font-size:14px;line-height:21px;color:#2b2b2b;font-weight:400;letter-spacing:0.000px;">885,95 €</div>
<svg style="position:absolute;left:1513px;top:549px;width:18px;height:18px;" viewBox="0 0 24 24" fill="none" stroke="#0d4a87" stroke-width="2.1" stroke-linecap="round" stroke-linejoin="round"><path d="M3 9l9 6l9 -6l-9 -6l-9 6"/><path d="M21 9v10a2 2 0 0 1 -2 2h-14a2 2 0 0 1 -2 -2v-10"/><path d="M3 19l6 -6"/><path d="M15 13l6 6"/></svg>
<svg style="position:absolute;left:1556px;top:548px;width:18px;height:18px;" viewBox="0 0 24 24" fill="none" stroke="#0d4a87" stroke-width="2.1" stroke-linecap="round" stroke-linejoin="round"><path d="M14 3v4a1 1 0 0 0 1 1h4"/><path d="M11.5 21h-4.5a2 2 0 0 1 -2 -2v-14a2 2 0 0 1 2 -2h7l5 5v5m-5 6h7m-3 -3l3 3l-3 3"/></svg>
<svg style="position:absolute;left:1597.5px;top:548px;width:18px;height:18px;" viewBox="0 0 24 24" fill="none" stroke="#0d4a87" stroke-width="2.1" stroke-linecap="round" stroke-linejoin="round"><path d="M14 3v4a1 1 0 0 0 1 1h4"/><path d="M5 12v-7a2 2 0 0 1 2 -2h7l5 5v4"/><path d="M4 15l4 6"/><path d="M4 21l4 -6"/><path d="M19 15v6h3"/><path d="M11 21v-6l2.5 3l2.5 -3v6"/></svg>
<div style="position:absolute;left:268px;top:584px;width:1392px;height:51px;background:#edf4fb"></div>
<div style="position:absolute;left:268px;top:635px;width:1392px;height:1px;background:#e0e0e0"></div>
<div style="position:absolute;left:284px;top:601px;width:18px;height:18px;background:#1976d2;border-radius:2px"></div><svg style="position:absolute;left:284px;top:601px;width:18px;height:18px;" viewBox="0 0 18 18" fill="none" stroke="#fff" stroke-width="1.9" stroke-linecap="round" stroke-linejoin="round"><path d="M3.2 8.7 L6.8 12.3 L14.7 4.4" stroke-linecap="butt" stroke-linejoin="miter"/></svg>
<div class="t" style="left:327.60px;top:598.00px;font-size:14px;line-height:21px;color:#2b2b2b;font-weight:400;letter-spacing:0.483px;">INV/000002</div>
<div class="t" style="left:519.95px;top:598.00px;font-size:14px;line-height:21px;color:#2b2b2b;font-weight:400;letter-spacing:0.169px;">Snowdevil</div>
<div class="t" style="left:710.90px;top:598.00px;font-size:14px;line-height:21px;color:#2b2b2b;font-weight:400;letter-spacing:0.000px;">-</div>
<div class="t" style="left:902.90px;top:598.00px;font-size:14px;line-height:21px;color:#2b2b2b;font-weight:400;letter-spacing:0.000px;">-</div>
<div class="t" style="left:1199.60px;top:598.00px;font-size:14px;line-height:21px;color:#2b2b2b;font-weight:400;letter-spacing:0.000px;">1.449,90 €</div>
<div class="t" style="left:1391.80px;top:598.00px;font-size:14px;line-height:21px;color:#2b2b2b;font-weight:400;letter-spacing:0.000px;">1.449,90 €</div>
<svg style="position:absolute;left:1513px;top:601px;width:18px;height:18px;" viewBox="0 0 24 24" fill="none" stroke="#0d4a87" stroke-width="2.1" stroke-linecap="round" stroke-linejoin="round"><path d="M3 9l9 6l9 -6l-9 -6l-9 6"/><path d="M21 9v10a2 2 0 0 1 -2 2h-14a2 2 0 0 1 -2 -2v-10"/><path d="M3 19l6 -6"/><path d="M15 13l6 6"/></svg>
<svg style="position:absolute;left:1556px;top:600px;width:18px;height:18px;" viewBox="0 0 24 24" fill="none" stroke="#0d4a87" stroke-width="2.1" stroke-linecap="round" stroke-linejoin="round"><path d="M14 3v4a1 1 0 0 0 1 1h4"/><path d="M11.5 21h-4.5a2 2 0 0 1 -2 -2v-14a2 2 0 0 1 2 -2h7l5 5v5m-5 6h7m-3 -3l3 3l-3 3"/></svg>
<svg style="position:absolute;left:1597.5px;top:600px;width:18px;height:18px;" viewBox="0 0 24 24" fill="none" stroke="#0d4a87" stroke-width="2.1" stroke-linecap="round" stroke-linejoin="round"><path d="M14 3v4a1 1 0 0 0 1 1h4"/><path d="M5 12v-7a2 2 0 0 1 2 -2h7l5 5v4"/><path d="M4 15l4 6"/><path d="M4 21l4 -6"/><path d="M19 15v6h3"/><path d="M11 21v-6l2.5 3l2.5 -3v6"/></svg>
<div style="position:absolute;left:268px;top:636px;width:1392px;height:52px;background:#edf4fb"></div>
<div style="position:absolute;left:268px;top:688px;width:1392px;height:1px;background:#e0e0e0"></div>
<div style="position:absolute;left:284px;top:653px;width:18px;height:18px;background:#1976d2;border-radius:2px"></div><svg style="position:absolute;left:284px;top:653px;width:18px;height:18px;" viewBox="0 0 18 18" fill="none" stroke="#fff" stroke-width="1.9" stroke-linecap="round" stroke-linejoin="round"><path d="M3.2 8.7 L6.8 12.3 L14.7 4.4" stroke-linecap="butt" stroke-linejoin="miter"/></svg>
<div class="t" style="left:327.60px;top:650.00px;font-size:14px;line-height:21px;color:#2b2b2b;font-weight:400;letter-spacing:0.483px;">INV/000001</div>
<div class="t" style="left:520.55px;top:650.00px;font-size:14px;line-height:21px;color:#2b2b2b;font-weight:400;letter-spacing:0.073px;">Ayumu Hirano</div>
<div class="t" style="left:710.90px;top:650.00px;font-size:14px;line-height:21px;color:#2b2b2b;font-weight:400;letter-spacing:0.000px;">-</div>
<div class="t" style="left:902.90px;top:650.00px;font-size:14px;line-height:21px;color:#2b2b2b;font-weight:400;letter-spacing:0.000px;">-</div>
<div class="t" style="left:1199.60px;top:650.00px;font-size:14px;line-height:21px;color:#2b2b2b;font-weight:400;letter-spacing:0.000px;">2.729,95 €</div>
<div class="t" style="left:1391.80px;top:650.00px;font-size:14px;line-height:21px;color:#2b2b2b;font-weight:400;letter-spacing:0.000px;">2.729,95 €</div>
<svg style="position:absolute;left:1513px;top:653px;width:18px;height:18px;" viewBox="0 0 24 24" fill="none" stroke="#0d4a87" stroke-width="2.1" stroke-linecap="round" stroke-linejoin="round"><path d="M3 9l9 6l9 -6l-9 -6l-9 6"/><path d="M21 9v10a2 2 0 0 1 -2 2h-14a2 2 0 0 1 -2 -2v-10"/><path d="M3 19l6 -6"/><path d="M15 13l6 6"/></svg>
<svg style="position:absolute;left:1556px;top:652px;width:18px;height:18px;" viewBox="0 0 24 24" fill="none" stroke="#0d4a87" stroke-width="2.1" stroke-linecap="round" stroke-linejoin="round"><path d="M14 3v4a1 1 0 0 0 1 1h4"/><path d="M11.5 21h-4.5a2 2 0 0 1 -2 -2v-14a2 2 0 0 1 2 -2h7l5 5v5m-5 6h7m-3 -3l3 3l-3 3"/></svg>
<svg style="position:absolute;left:1597.5px;top:652px;width:18px;height:18px;" viewBox="0 0 24 24" fill="none" stroke="#0d4a87" stroke-width="2.1" stroke-linecap="round" stroke-linejoin="round"><path d="M14 3v4a1 1 0 0 0 1 1h4"/><path d="M5 12v-7a2 2 0 0 1 2 -2h7l5 5v4"/><path d="M4 15l4 6"/><path d="M4 21l4 -6"/><path d="M19 15v6h3"/><path d="M11 21v-6l2.5 3l2.5 -3v6"/></svg>
<div class="t" style="left:283.70px;top:704.00px;font-size:14px;line-height:21px;color:#222;font-weight:400;letter-spacing:0.229px;">7 rows selected</div>
<div class="t" style="left:1237.75px;top:704.00px;font-size:14px;line-height:21px;color:#222;font-weight:400;letter-spacing:0.100px;">Rows per page:</div>
<div class="t" style="left:1352.05px;top:703.00px;font-size:14px;line-height:21px;color:#222;font-weight:400;letter-spacing:0.200px;">10</div>
<div style="position:absolute;left:1375px;top:713px;width:0;height:0;border-left:5px solid transparent;border-right:5px solid transparent;border-top:5px solid #666"></div>
<div class="t" style="left:1424.45px;top:704.00px;font-size:14px;line-height:21px;color:#222;font-weight:400;letter-spacing:0.407px;">1–7 of 7</div>
<svg style="position:absolute;left:1506px;top:703px;width:24px;height:24px" viewBox="0 0 24 24" fill="#bdbdbd"><path d="M18.41 16.59L13.82 12l4.59-4.59L17 6l-6 6 6 6zM6 6h2v12H6z"/></svg>
<svg style="position:absolute;left:1546px;top:703px;width:24px;height:24px" viewBox="0 0 24 24" fill="#bdbdbd"><path d="M15.41 16.59L10.83 12l4.58-4.59L14 6l-6 6 6 6 1.41-1.41z"/></svg>
<svg style="position:absolute;left:1586px;top:703px;width:24px;height:24px" viewBox="0 0 24 24" fill="#bdbdbd"><path d="M8.59 16.59L13.17 12 8.59 7.41 10 6l6 6-6 6-1.41-1.41z"/></svg>
<svg style="position:absolute;left:1626px;top:703px;width:24px;height:24px" viewBox="0 0 24 24" fill="#bdbdbd"><path d="M5.59 7.41L10.18 12l-4.59 4.59L7 18l6-6-6-6zM16 6h2v12h-2z"/></svg>
<svg style="position:absolute;left:0;top:280px;width:260px;height:60px;overflow:visible" viewBox="0 280 260 60">
<defs><filter id="sh" x="-20%" y="-50%" width="140%" height="200%"><feDropShadow dx="1.5" dy="2.5" stdDeviation="2.2" flood-color="#000" flood-opacity="0.55"/></filter></defs>
<g filter="url(#sh)">
<rect x="16.5" y="296.5" width="135.5" height="28" rx="10" ry="10" fill="none" stroke="#7f00ff" stroke-width="3"/>
<path d="M172 308.5 L246.5 308.5" stroke="#7f00ff" stroke-width="3" stroke-linecap="round"/>
<path d="M157 308.5 L180 300 L175 308.5 L180 317 Z" fill="#7f00ff"/>
</g></svg>
<div style="position:absolute;left:1578px;top:793px;width:82px;height:44px;border-radius:22px;background:#0f4a8a;border:2px solid #fff;box-shadow:0 1px 4px rgba(0,0,0,0.18)"></div>
<div style="position:absolute;left:1557px;top:788px;width:40px;height:40px;border-radius:50%;background:linear-gradient(45deg,#2272b3,#0f4a8a);border:2px solid #fff"></div>
<svg style="position:absolute;left:1568px;top:801px;width:20px;height:20px;" viewBox="0 0 24 24" fill="none" stroke="#fff" stroke-width="1.8" stroke-linecap="round" stroke-linejoin="round"><path d="M16.5 10c3.038 0 5.5 2.015 5.5 4.5c0 1.397 -.778 2.645 -2 3.47l0 2.03l-1.964 -1.178a6.649 6.649 0 0 1 -1.536 .178c-3.038 0 -5.5 -2.015 -5.5 -4.5s2.462 -4.5 5.5 -4.5z"/><path d="M11.197 15.698c-.69 .196 -1.43 .302 -2.197 .302a8.008 8.008 0 0 1 -2.612 -.432l-2.388 1.432v-2.801c-1.237 -1.082 -2 -2.564 -2 -4.199c0 -3.314 3.134 -6 7 -6c3.782 0 6.863 2.57 7 5.785l0 .233"/><path d="M10 8h.01"/><path d="M7 8h.01"/><path d="M15 13h.01"/><path d="M18 13h.01"/></svg>
<div class="t" style="left:1608.65px;top:802.00px;font-size:16.3px;line-height:25px;color:#fff;font-weight:400;letter-spacing:0.362px;-webkit-text-stroke:0.2px #fff;">Hilfe</div>
</body></html>
